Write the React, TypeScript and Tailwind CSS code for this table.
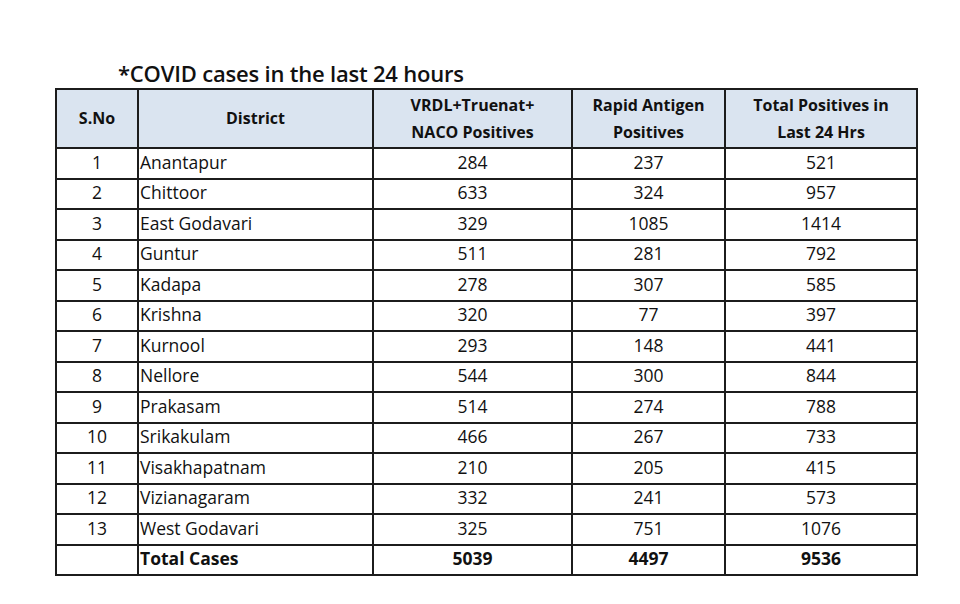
const rows: [number, string, number, number, number][] = [
  [1, "Anantapur", 284, 237, 521],
  [2, "Chittoor", 633, 324, 957],
  [3, "East Godavari", 329, 1085, 1414],
  [4, "Guntur", 511, 281, 792],
  [5, "Kadapa", 278, 307, 585],
  [6, "Krishna", 320, 77, 397],
  [7, "Kurnool", 293, 148, 441],
  [8, "Nellore", 544, 300, 844],
  [9, "Prakasam", 514, 274, 788],
  [10, "Srikakulam", 466, 267, 733],
  [11, "Visakhapatnam", 210, 205, 415],
  [12, "Vizianagaram", 332, 241, 573],
  [13, "West Godavari", 325, 751, 1076],
];

const cell = "border-2 border-[#1c1c1c] p-0 pb-[3px]";
const head = "border-2 border-[#1c1c1c] p-0";

export default function App() {
  return (
    <div
      className="w-[960px] h-[604px] bg-white pt-[58px] pl-[55px] text-[#111]"
      style={{ fontFamily: "'Open Sans', 'Liberation Sans', sans-serif" }}
    >
      <div className="pl-[63px] h-[30px] leading-[30px] text-[22px] font-semibold tracking-[-0.2px]">
        *COVID cases in the last 24 hours
      </div>
      <table className="border-collapse table-fixed w-[861px]">
        <colgroup>
          <col className="w-[82px]" />
          <col className="w-[235px]" />
          <col className="w-[199px]" />
          <col className="w-[153px]" />
          <col className="w-[192px]" />
        </colgroup>
        <thead>
          <tr className="h-[59px] bg-[#dae4f0] text-[16px] font-bold leading-[27px]">
            <th className={head}>S.No</th>
            <th className={head}>District</th>
            <th className={head}>
              VRDL+Truenat+
              <br />
              NACO Positives
            </th>
            <th className={head}>
              Rapid Antigen
              <br />
              Positives
            </th>
            <th className={head}>
              Total Positives in
              <br />
              Last 24 Hrs
            </th>
          </tr>
        </thead>
        <tbody className="text-[17.5px] leading-[22px]">
          {rows.map(([n, d, a, b, c]) => (
            <tr key={n} className="h-[30.5px]">
              <td className={`${cell} text-center`}>{n}</td>
              <td className={`${cell} pl-[1px]`}>{d}</td>
              <td className={`${cell} text-center`}>{a}</td>
              <td className={`${cell} text-center`}>{b}</td>
              <td className={`${cell} text-center`}>{c}</td>
            </tr>
          ))}
          <tr className="h-[30.5px] font-bold">
            <td className={cell}></td>
            <td className={`${cell} pl-[1px]`}>Total Cases</td>
            <td className={`${cell} text-center`}>5039</td>
            <td className={`${cell} text-center`}>4497</td>
            <td className={`${cell} text-center`}>9536</td>
          </tr>
        </tbody>
      </table>
    </div>
  );
}
